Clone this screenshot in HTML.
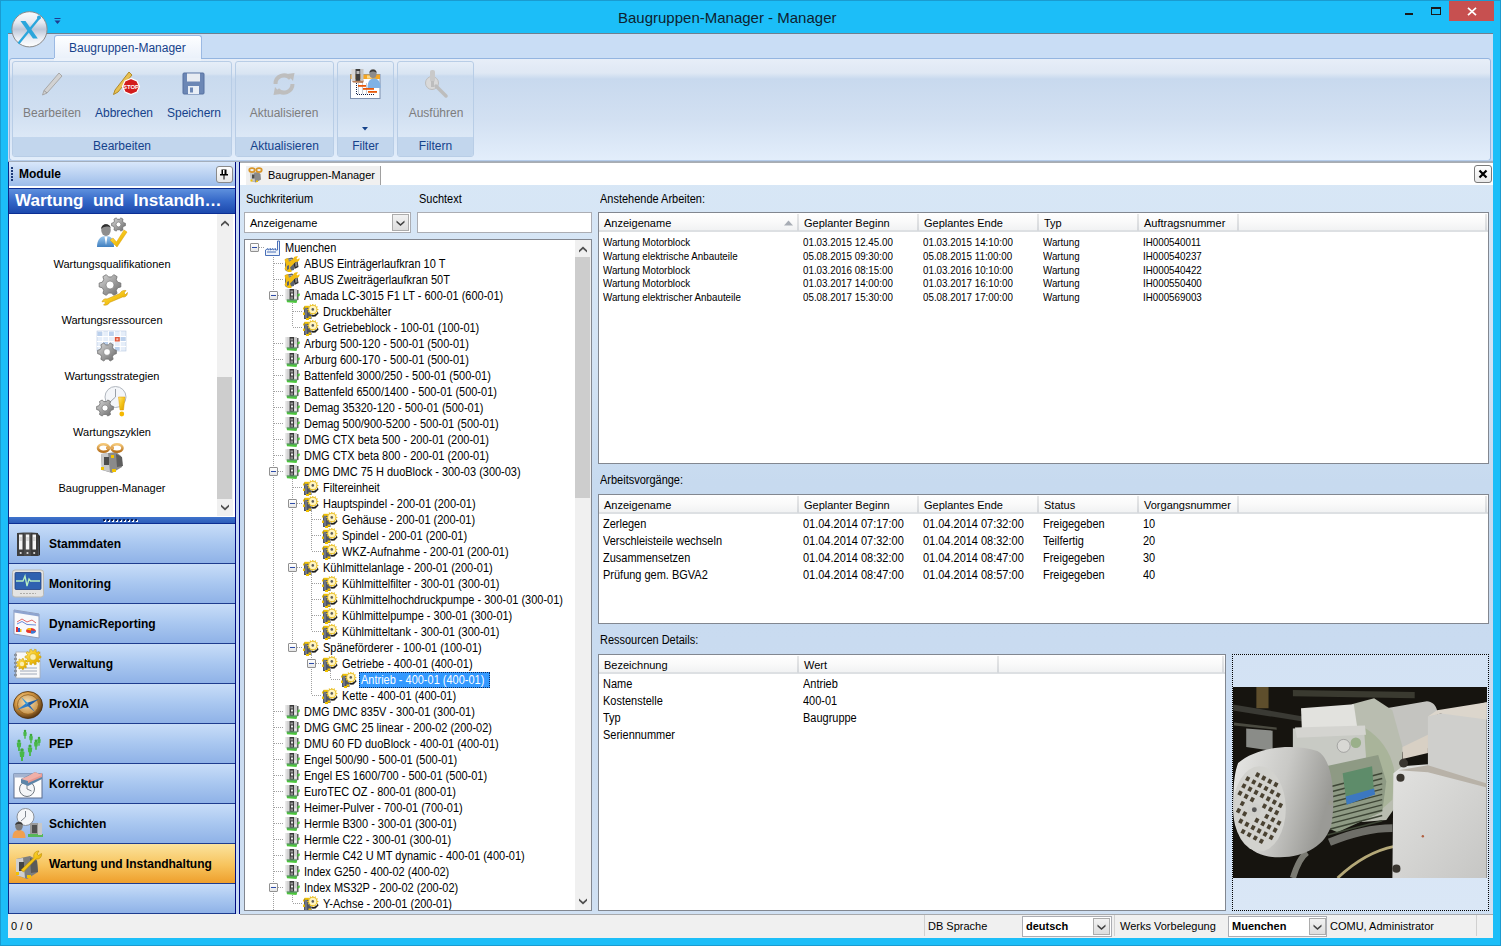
<!DOCTYPE html><html><head><meta charset="utf-8"><style>
*{box-sizing:border-box}
html,body{margin:0;padding:0}
body{width:1501px;height:946px;position:relative;overflow:hidden;background:#1CBEF8;font-family:"Liberation Sans",sans-serif;font-size:11px;color:#000}
div{position:absolute}
.t{position:absolute;white-space:nowrap;line-height:13px}
.n{transform-origin:0 0;transform:scaleX(0.89)}
.tt{font-size:12px;transform-origin:0 0;transform:scaleX(0.915)}
svg{position:absolute;overflow:visible}
</style></head><body>

<div style="position:absolute;left:0px;top:0px;width:1501px;height:1px;background:#1A9BD0"></div>
<div style="position:absolute;left:0px;top:0px;width:1px;height:946px;background:#1A9BD0"></div>
<div style="position:absolute;left:1500px;top:0px;width:1px;height:946px;background:#1A9BD0"></div>
<div style="position:absolute;left:0px;top:945px;width:1501px;height:1px;background:#1A9BD0"></div>
<div class="t" style="left:618px;top:9px;font-size:15px;line-height:17px;color:#0E2230">Baugruppen-Manager - Manager</div>
<div style="position:absolute;left:1449px;top:1px;width:45px;height:20px;background:#C75050"></div>
<svg style="left:1467px;top:7px" width="10" height="9"><path d="M1 0.8 L9 8.2 M9 0.8 L1 8.2" stroke="#fff" stroke-width="1.7"/></svg>
<div style="position:absolute;left:1405px;top:13px;width:8px;height:2px;background:#1a1a1a"></div>
<div style="position:absolute;left:1431px;top:7px;width:10px;height:8px;border:1px solid #1a1a1a;border-top-width:2px"></div>
<div style="position:absolute;left:8px;top:33px;width:1485px;height:905px;background:#C9DDF5"></div>
<div style="position:absolute;left:8px;top:33px;width:1485px;height:1px;background:#6F7F8F"></div>
<div style="position:absolute;left:54px;top:35px;width:148px;height:25px;background:linear-gradient(#FDFEFF,#E9F0FA);border:1px solid #9BB9E3;border-bottom:none;border-radius:3px 3px 0 0"></div>
<div class="t" style="left:69px;top:41px;font-size:12px;line-height:14px;color:#15428B">Baugruppen-Manager</div>
<div style="position:absolute;left:9px;top:58px;width:1482px;height:103px;background:linear-gradient(#E7EEF8 0px,#DFE8F4 14px,#C8D9EE 20px,#D2E0F2 60px,#E3EEFB 102px);border:1px solid #94B5E0;border-radius:3px"></div>
<div style="position:absolute;left:54px;top:58px;width:147px;height:3px;background:#EDF3FB"></div>
<div style="position:absolute;left:12px;top:61px;width:220px;height:96px;border:1px solid #B8CDE6;border-radius:3px;background:linear-gradient(#E6EEF8 0px,#D8E4F2 12px,#C9DAEE 14px,#D0DFF1 50px,#DCE8F6 75px)"></div>
<div style="position:absolute;left:13px;top:137px;width:218px;height:19px;background:#C2D6ED;border-radius:0 0 2px 2px"></div>
<div class="t" style="left:12px;top:139px;width:220px;text-align:center;font-size:12px;line-height:14px;color:#15428B">Bearbeiten</div>
<div style="position:absolute;left:235px;top:61px;width:99px;height:96px;border:1px solid #B8CDE6;border-radius:3px;background:linear-gradient(#E6EEF8 0px,#D8E4F2 12px,#C9DAEE 14px,#D0DFF1 50px,#DCE8F6 75px)"></div>
<div style="position:absolute;left:236px;top:137px;width:97px;height:19px;background:#C2D6ED;border-radius:0 0 2px 2px"></div>
<div class="t" style="left:235px;top:139px;width:99px;text-align:center;font-size:12px;line-height:14px;color:#15428B">Aktualisieren</div>
<div style="position:absolute;left:337px;top:61px;width:57px;height:96px;border:1px solid #B8CDE6;border-radius:3px;background:linear-gradient(#E6EEF8 0px,#D8E4F2 12px,#C9DAEE 14px,#D0DFF1 50px,#DCE8F6 75px)"></div>
<div style="position:absolute;left:338px;top:137px;width:55px;height:19px;background:#C2D6ED;border-radius:0 0 2px 2px"></div>
<div class="t" style="left:337px;top:139px;width:57px;text-align:center;font-size:12px;line-height:14px;color:#15428B">Filter</div>
<div style="position:absolute;left:397px;top:61px;width:77px;height:96px;border:1px solid #B8CDE6;border-radius:3px;background:linear-gradient(#E6EEF8 0px,#D8E4F2 12px,#C9DAEE 14px,#D0DFF1 50px,#DCE8F6 75px)"></div>
<div style="position:absolute;left:398px;top:137px;width:75px;height:19px;background:#C2D6ED;border-radius:0 0 2px 2px"></div>
<div class="t" style="left:397px;top:139px;width:77px;text-align:center;font-size:12px;line-height:14px;color:#15428B">Filtern</div>
<div class="t" style="left:-8px;top:106px;width:120px;text-align:center;font-size:12px;line-height:14px;color:#7D7D7D">Bearbeiten</div>
<div class="t" style="left:64px;top:106px;width:120px;text-align:center;font-size:12px;line-height:14px;color:#15428B">Abbrechen</div>
<div class="t" style="left:134px;top:106px;width:120px;text-align:center;font-size:12px;line-height:14px;color:#15428B">Speichern</div>
<div class="t" style="left:224px;top:106px;width:120px;text-align:center;font-size:12px;line-height:14px;color:#7D7D7D">Aktualisieren</div>
<div class="t" style="left:376px;top:106px;width:120px;text-align:center;font-size:12px;line-height:14px;color:#7D7D7D">Ausführen</div>
<svg style="left:40px;top:71px" width="24" height="26" viewBox="0 0 24 26"><path d="M19 2 L22 5 L7 22 L2.5 24 L4 19.5 Z" fill="#D2D2D2" stroke="#A8A8A8" stroke-width="1"/><path d="M4 19.5 L7 22" stroke="#9a9a9a"/></svg>
<svg style="left:112px;top:71px" width="28" height="26" viewBox="0 0 28 26"><path d="M17 1 L20 4 L6 21 L1.5 23.5 L3 19 Z" fill="#E8C050" stroke="#B08A2A" stroke-width="1"/><polygon points="13,10 19,7.5 25,10 27.5,15.5 25,21 19,23.5 13,21 10.5,15.5" fill="#D21C1C" stroke="#fff" stroke-width="1.2"/><text x="19" y="17.8" font-size="6" font-weight="bold" fill="#fff" text-anchor="middle" font-family="Liberation Sans">STOP</text></svg>
<svg style="left:182px;top:72px" width="24" height="24" viewBox="0 0 24 24"><rect x="1" y="1" width="21" height="21" rx="1" fill="#6C87B5" stroke="#5670A0"/><rect x="5" y="1.5" width="13" height="8" fill="#E8ECF2"/><rect x="6" y="14" width="11" height="8" fill="#E8EEF6"/><rect x="8" y="15.5" width="3" height="5" fill="#6C87B5"/></svg>
<svg style="left:271px;top:71px" width="26" height="26" viewBox="0 0 26 26"><path d="M4.5 13 A8.5 8.5 0 0 1 19.5 7.5" fill="none" stroke="#BEBEBE" stroke-width="4"/><path d="M21.5 13 A8.5 8.5 0 0 1 6.5 18.5" fill="none" stroke="#BEBEBE" stroke-width="4"/><path d="M16 3 L23.5 2 L22 10 Z" fill="#BEBEBE"/><path d="M10 23 L2.5 24 L4 16 Z" fill="#BEBEBE"/></svg>
<svg style="left:349px;top:68px" width="33" height="32" viewBox="0 0 33 32"><rect x="1.5" y="6.5" width="29.5" height="24" fill="#fff" stroke="#7E90AE" stroke-width="1"/><rect x="1.5" y="6.5" width="29.5" height="4.5" fill="#F5A623"/><rect x="18" y="7.5" width="5" height="3" fill="#FBD98A"/>
<g fill="#C8CED6"><rect x="9" y="15" width="1" height="11"/><rect x="13" y="15" width="1" height="11"/><rect x="17" y="15" width="1" height="11"/></g>
<path d="M7.5 15 V26.5 H26" fill="none" stroke="#10204A" stroke-width="1" stroke-dasharray="1 1"/>
<rect x="9" y="17" width="8" height="1.8" fill="#E85A0C"/><rect x="14" y="20" width="11" height="1.8" fill="#E85A0C"/><rect x="19" y="23" width="9" height="1.8" fill="#E85A0C"/>
<path d="M18.5 20 C18.5 12 22 10.5 25 10.5 C29 10.5 31.5 13 31.5 20Z" fill="#7FB2E5"/><ellipse cx="24" cy="5.5" rx="3.6" ry="4.5" fill="#8C8C8C"/><path d="M20.4 5 C20.5 1 27.5 0.5 27.6 5 C26 3 22 3 20.4 5Z" fill="#3A3A3A"/>
<rect x="2.5" y="1" width="4" height="12" fill="#D8D8D8"/><rect x="6.5" y="1" width="5" height="12" fill="#3E3E3E"/><rect x="7.5" y="3" width="3" height="3" fill="#BBBBBB"/><rect x="11.5" y="1" width="3" height="11.5" fill="#C4C4C4"/><path d="M3 13 L15 12.5 L14 15 L4 14.5Z" fill="#B8805A"/></svg>
<svg style="left:362px;top:127px" width="6" height="4"><path d="M0 0 H6 L3 3.5 Z" fill="#15428B"/></svg>
<svg style="left:422px;top:68px" width="28" height="30" viewBox="0 0 28 30"><circle cx="10" cy="15" r="6.5" fill="#D9D9D9" stroke="#BDBDBD"/><path d="M14 18 L24 28" stroke="#BDBDBD" stroke-width="3.5" stroke-linecap="round"/><rect x="8" y="2" width="5" height="12" rx="2" fill="#C9C9C9"/><rect x="9" y="13" width="3" height="6" fill="#BDBDBD"/></svg>
<div style="position:absolute;left:8px;top:160px;width:1485px;height:1px;background:#B5CCEA"></div>
<div style="position:absolute;left:8px;top:161px;width:1485px;height:1px;background:#A3AEBC"></div>
<div style="position:absolute;left:8px;top:162px;width:228px;height:752px;background:#fff;border-left:1px solid #0B2A8C;border-right:1px solid #000A80"></div>
<div style="position:absolute;left:236px;top:162px;width:3px;height:752px;background:#C7DAF2"></div>
<div style="position:absolute;left:239px;top:162px;width:1px;height:752px;background:#000A80"></div>
<div style="position:absolute;left:9px;top:162px;width:226px;height:24px;background:linear-gradient(#D9E7FA,#9DBDEA)"></div>
<div style="position:absolute;left:11px;top:167px;width:2px;height:2px;background:#1C3A78"></div>
<div style="position:absolute;left:11px;top:170px;width:2px;height:2px;background:#1C3A78"></div>
<div style="position:absolute;left:11px;top:173px;width:2px;height:2px;background:#1C3A78"></div>
<div style="position:absolute;left:11px;top:176px;width:2px;height:2px;background:#1C3A78"></div>
<div style="position:absolute;left:11px;top:179px;width:2px;height:2px;background:#1C3A78"></div>
<div class="t" style="left:19px;top:167px;font-weight:bold;font-size:12px;line-height:14px">Module</div>
<div style="position:absolute;left:216px;top:166px;width:17px;height:17px;background:linear-gradient(#FFFFFF,#E6E6E6);border:1px solid #8A8A8A;border-radius:3px"></div>
<svg style="left:219px;top:169px" width="10" height="11"><path d="M2.5 0.5 H7.5 V5 H9 V6.5 H1 V5 H2.5 Z" fill="#000"/><rect x="4" y="1" width="1.5" height="4" fill="#fff"/><rect x="4.5" y="6" width="1" height="4.5" fill="#000"/></svg>
<div style="position:absolute;left:9px;top:186px;width:226px;height:2px;background:#fff"></div>
<div style="position:absolute;left:9px;top:188px;width:226px;height:26px;background:linear-gradient(#5E90DD,#3568C8 50%,#1C49AD);border-top:1px solid #0C2F93;border-bottom:1px solid #0C2F93"></div>
<div class="t" style="left:15px;top:192px;font-weight:bold;font-size:16px;line-height:18px;color:#fff;transform-origin:0 0;transform:scaleX(1.065)">Wartung&nbsp; und&nbsp; Instandh…</div>
<div style="position:absolute;left:217px;top:214px;width:16px;height:302px;background:#F0F0F0"></div>
<div style="position:absolute;left:217px;top:377px;width:15px;height:122px;background:#CDCDCD"></div>
<svg style="left:221px;top:220px" width="8" height="7"><path d="M0 6.5 L4 3 L8 6.5 L8 4.2 L4 0.5 L0 4.2Z" fill="#505050"/></svg>
<svg style="left:221px;top:504px" width="8" height="7"><path d="M0 0.5 L4 4 L8 0.5 L8 2.8 L4 6.5 L0 2.8Z" fill="#505050"/></svg>
<div class="t" style="left:12px;top:258px;width:200px;text-align:center;color:#000">Wartungsqualifikationen</div>
<div class="t" style="left:12px;top:314px;width:200px;text-align:center;color:#000">Wartungsressourcen</div>
<div class="t" style="left:12px;top:370px;width:200px;text-align:center;color:#000">Wartungsstrategien</div>
<div class="t" style="left:12px;top:426px;width:200px;text-align:center;color:#000">Wartungszyklen</div>
<div class="t" style="left:12px;top:482px;width:200px;text-align:center;color:#000">Baugruppen-Manager</div>
<div style="position:absolute;left:9px;top:517px;width:226px;height:7px;background:linear-gradient(#3F73CC,#2C5CB8);border-bottom:1px solid #0C2F93"></div>
<div style="position:absolute;left:104px;top:520px;width:2px;height:2px;background:#fff"></div>
<div style="position:absolute;left:103px;top:519px;width:2px;height:2px;background:#0E1E50"></div>
<div style="position:absolute;left:108px;top:520px;width:2px;height:2px;background:#fff"></div>
<div style="position:absolute;left:107px;top:519px;width:2px;height:2px;background:#0E1E50"></div>
<div style="position:absolute;left:112px;top:520px;width:2px;height:2px;background:#fff"></div>
<div style="position:absolute;left:111px;top:519px;width:2px;height:2px;background:#0E1E50"></div>
<div style="position:absolute;left:116px;top:520px;width:2px;height:2px;background:#fff"></div>
<div style="position:absolute;left:115px;top:519px;width:2px;height:2px;background:#0E1E50"></div>
<div style="position:absolute;left:120px;top:520px;width:2px;height:2px;background:#fff"></div>
<div style="position:absolute;left:119px;top:519px;width:2px;height:2px;background:#0E1E50"></div>
<div style="position:absolute;left:124px;top:520px;width:2px;height:2px;background:#fff"></div>
<div style="position:absolute;left:123px;top:519px;width:2px;height:2px;background:#0E1E50"></div>
<div style="position:absolute;left:128px;top:520px;width:2px;height:2px;background:#fff"></div>
<div style="position:absolute;left:127px;top:519px;width:2px;height:2px;background:#0E1E50"></div>
<div style="position:absolute;left:132px;top:520px;width:2px;height:2px;background:#fff"></div>
<div style="position:absolute;left:131px;top:519px;width:2px;height:2px;background:#0E1E50"></div>
<div style="position:absolute;left:136px;top:520px;width:2px;height:2px;background:#fff"></div>
<div style="position:absolute;left:135px;top:519px;width:2px;height:2px;background:#0E1E50"></div>
<div style="position:absolute;left:9px;top:524px;width:226px;height:40px;background:linear-gradient(#C8DDF8,#A9C7F0 50%,#8FB2E7);border-bottom:1px solid #1D3C8F"></div>
<div class="t" style="left:49px;top:537px;font-weight:bold;font-size:12px;line-height:14px;color:#000">Stammdaten</div>
<div style="position:absolute;left:9px;top:564px;width:226px;height:40px;background:linear-gradient(#C8DDF8,#A9C7F0 50%,#8FB2E7);border-bottom:1px solid #1D3C8F"></div>
<div class="t" style="left:49px;top:577px;font-weight:bold;font-size:12px;line-height:14px;color:#000">Monitoring</div>
<div style="position:absolute;left:9px;top:604px;width:226px;height:40px;background:linear-gradient(#C8DDF8,#A9C7F0 50%,#8FB2E7);border-bottom:1px solid #1D3C8F"></div>
<div class="t" style="left:49px;top:617px;font-weight:bold;font-size:12px;line-height:14px;color:#000">DynamicReporting</div>
<div style="position:absolute;left:9px;top:644px;width:226px;height:40px;background:linear-gradient(#C8DDF8,#A9C7F0 50%,#8FB2E7);border-bottom:1px solid #1D3C8F"></div>
<div class="t" style="left:49px;top:657px;font-weight:bold;font-size:12px;line-height:14px;color:#000">Verwaltung</div>
<div style="position:absolute;left:9px;top:684px;width:226px;height:40px;background:linear-gradient(#C8DDF8,#A9C7F0 50%,#8FB2E7);border-bottom:1px solid #1D3C8F"></div>
<div class="t" style="left:49px;top:697px;font-weight:bold;font-size:12px;line-height:14px;color:#000">ProXIA</div>
<div style="position:absolute;left:9px;top:724px;width:226px;height:40px;background:linear-gradient(#C8DDF8,#A9C7F0 50%,#8FB2E7);border-bottom:1px solid #1D3C8F"></div>
<div class="t" style="left:49px;top:737px;font-weight:bold;font-size:12px;line-height:14px;color:#000">PEP</div>
<div style="position:absolute;left:9px;top:764px;width:226px;height:40px;background:linear-gradient(#C8DDF8,#A9C7F0 50%,#8FB2E7);border-bottom:1px solid #1D3C8F"></div>
<div class="t" style="left:49px;top:777px;font-weight:bold;font-size:12px;line-height:14px;color:#000">Korrektur</div>
<div style="position:absolute;left:9px;top:804px;width:226px;height:40px;background:linear-gradient(#C8DDF8,#A9C7F0 50%,#8FB2E7);border-bottom:1px solid #1D3C8F"></div>
<div class="t" style="left:49px;top:817px;font-weight:bold;font-size:12px;line-height:14px;color:#000">Schichten</div>
<div style="position:absolute;left:9px;top:844px;width:226px;height:40px;background:linear-gradient(#FBE39E,#F7C35C 55%,#EE9F2C);border-bottom:1px solid #1D3C8F"></div>
<div class="t" style="left:49px;top:857px;font-weight:bold;font-size:12px;line-height:14px;color:#000">Wartung und Instandhaltung</div>
<div style="position:absolute;left:9px;top:884px;width:226px;height:30px;background:linear-gradient(#C8DDF8,#A9C7F0 50%,#8FB2E7);border-bottom:1px solid #1D3C8F"></div>
<div style="position:absolute;left:8px;top:914px;width:1485px;height:24px;background:#F0F0F0"></div>
<div class="t" style="left:11px;top:920px;font-size:11px">0 / 0</div>
<div style="position:absolute;left:240px;top:914px;width:1253px;height:1px;background:#A7A9AC"></div>
<div style="position:absolute;left:240px;top:162px;width:1253px;height:752px;background:linear-gradient(#D8E7F6 0px,#D3E3F4 200px,#C7DAEF 320px,#C9DBF0 480px,#CCDDF1 640px,#D6E5F5 900px)"></div>
<div style="position:absolute;left:240px;top:162px;width:1253px;height:23px;background:#fff;border-top:1px solid #A9ADB2"></div>
<div style="position:absolute;left:246px;top:166px;width:134px;height:19px;background:#F0F0F0"></div>
<div style="position:absolute;left:380px;top:166px;width:1px;height:19px;background:#A0A0A0"></div>
<div class="t" style="left:268px;top:169px;font-size:11px;line-height:13px">Baugruppen-Manager</div>
<div style="position:absolute;left:1474px;top:165px;width:18px;height:18px;background:linear-gradient(#fff,#E8E8E8);border:1px solid #7A7A7A;border-radius:3px"></div>
<svg style="left:1478px;top:169px" width="10" height="10"><path d="M1.5 1.5 L8.5 8.5 M8.5 1.5 L1.5 8.5" stroke="#000" stroke-width="2.2"/></svg>
<div class="t" style="left:246px;top:193px;font-size:12px;transform-origin:0 0;transform:scaleX(0.915)">Suchkriterium</div>
<div class="t" style="left:419px;top:193px;font-size:12px;transform-origin:0 0;transform:scaleX(0.915)">Suchtext</div>
<div style="position:absolute;left:244px;top:212px;width:167px;height:21px;background:#fff;border:1px solid #ABADB3"></div>
<div style="position:absolute;left:392px;top:214px;width:17px;height:17px;background:linear-gradient(#F2F2F2,#DDDDDD);border:1px solid #ACACAC"></div>
<svg style="left:396px;top:220px" width="9" height="7"><path d="M0.5 0.5 L4.5 4 L8.5 0.5 L8.5 2.5 L4.5 6 L0.5 2.5Z" fill="#404040"/></svg>
<div class="t" style="left:250px;top:217px;">Anzeigename</div>
<div style="position:absolute;left:417px;top:212px;width:175px;height:21px;background:#fff;border:1px solid #ABADB3"></div>
<div style="position:absolute;left:244px;top:239px;width:348px;height:672px;background:#fff;border:1px solid #828790"></div>
<div style="position:absolute;left:575px;top:240px;width:16px;height:670px;background:#F0F0F0"></div>
<div style="position:absolute;left:575px;top:257px;width:15px;height:241px;background:#CDCDCD"></div>
<svg style="left:579px;top:246px" width="8" height="7"><path d="M0 6.5 L4 3 L8 6.5 L8 4.2 L4 0.5 L0 4.2Z" fill="#505050"/></svg>
<svg style="left:579px;top:898px" width="8" height="7"><path d="M0 0.5 L4 4 L8 0.5 L8 2.8 L4 6.5 L0 2.8Z" fill="#505050"/></svg>
<div class="t" style="left:600px;top:193px;font-size:12px;transform-origin:0 0;transform:scaleX(0.915)">Anstehende Arbeiten:</div>
<div class="t" style="left:600px;top:474px;font-size:12px;transform-origin:0 0;transform:scaleX(0.915)">Arbeitsvorgänge:</div>
<div class="t" style="left:600px;top:634px;font-size:12px;transform-origin:0 0;transform:scaleX(0.915)">Ressourcen Details:</div>
<div style="position:absolute;left:598px;top:212px;width:891px;height:252px;background:#fff;border:1px solid #828790"></div>
<div style="position:absolute;left:599px;top:213px;width:889px;height:19px;background:linear-gradient(#FFFFFF,#FAFAFA 50%,#F1F2F3);border-bottom:2px solid #DDE0E3"></div>
<div class="t" style="left:604px;top:217px;">Anzeigename</div>
<div style="position:absolute;left:797px;top:214px;width:2px;height:17px;background:linear-gradient(#E8E8E8,#D5D8DC)"></div>
<div class="t" style="left:804px;top:217px;">Geplanter Beginn</div>
<div style="position:absolute;left:917px;top:214px;width:2px;height:17px;background:linear-gradient(#E8E8E8,#D5D8DC)"></div>
<div class="t" style="left:924px;top:217px;">Geplantes Ende</div>
<div style="position:absolute;left:1037px;top:214px;width:2px;height:17px;background:linear-gradient(#E8E8E8,#D5D8DC)"></div>
<div class="t" style="left:1044px;top:217px;">Typ</div>
<div style="position:absolute;left:1137px;top:214px;width:2px;height:17px;background:linear-gradient(#E8E8E8,#D5D8DC)"></div>
<div class="t" style="left:1144px;top:217px;">Auftragsnummer</div>
<div style="position:absolute;left:1237px;top:214px;width:2px;height:17px;background:linear-gradient(#E8E8E8,#D5D8DC)"></div>
<div style="position:absolute;left:1485px;top:214px;width:2px;height:17px;background:linear-gradient(#E8E8E8,#D5D8DC)"></div>
<svg style="left:784px;top:220px" width="9" height="6"><path d="M0 5.5 L4.5 0.5 L9 5.5 Z" fill="#A8ADB5"/></svg>
<div style="position:absolute;left:598px;top:494px;width:891px;height:130px;background:#fff;border:1px solid #828790"></div>
<div style="position:absolute;left:599px;top:495px;width:889px;height:19px;background:linear-gradient(#FFFFFF,#FAFAFA 50%,#F1F2F3);border-bottom:2px solid #DDE0E3"></div>
<div class="t" style="left:604px;top:499px;">Anzeigename</div>
<div style="position:absolute;left:797px;top:496px;width:2px;height:17px;background:linear-gradient(#E8E8E8,#D5D8DC)"></div>
<div class="t" style="left:804px;top:499px;">Geplanter Beginn</div>
<div style="position:absolute;left:917px;top:496px;width:2px;height:17px;background:linear-gradient(#E8E8E8,#D5D8DC)"></div>
<div class="t" style="left:924px;top:499px;">Geplantes Ende</div>
<div style="position:absolute;left:1037px;top:496px;width:2px;height:17px;background:linear-gradient(#E8E8E8,#D5D8DC)"></div>
<div class="t" style="left:1044px;top:499px;">Status</div>
<div style="position:absolute;left:1137px;top:496px;width:2px;height:17px;background:linear-gradient(#E8E8E8,#D5D8DC)"></div>
<div class="t" style="left:1144px;top:499px;">Vorgangsnummer</div>
<div style="position:absolute;left:1237px;top:496px;width:2px;height:17px;background:linear-gradient(#E8E8E8,#D5D8DC)"></div>
<div style="position:absolute;left:1485px;top:496px;width:2px;height:17px;background:linear-gradient(#E8E8E8,#D5D8DC)"></div>
<div style="position:absolute;left:598px;top:654px;width:628px;height:257px;background:#fff;border:1px solid #828790"></div>
<div style="position:absolute;left:599px;top:655px;width:626px;height:19px;background:linear-gradient(#FFFFFF,#FAFAFA 50%,#F1F2F3);border-bottom:2px solid #DDE0E3"></div>
<div class="t" style="left:604px;top:659px;">Bezeichnung</div>
<div style="position:absolute;left:797px;top:656px;width:2px;height:17px;background:linear-gradient(#E8E8E8,#D5D8DC)"></div>
<div class="t" style="left:804px;top:659px;">Wert</div>
<div style="position:absolute;left:997px;top:656px;width:2px;height:17px;background:linear-gradient(#E8E8E8,#D5D8DC)"></div>
<div style="position:absolute;left:1222px;top:656px;width:2px;height:17px;background:linear-gradient(#E8E8E8,#D5D8DC)"></div>
<div class="t n" style="left:603px;top:236px">Wartung Motorblock</div>
<div class="t n" style="left:803px;top:236px">01.03.2015 12.45.00</div>
<div class="t n" style="left:923px;top:236px">01.03.2015 14:10:00</div>
<div class="t n" style="left:1043px;top:236px">Wartung</div>
<div class="t n" style="left:1143px;top:236px">IH000540011</div>
<div class="t n" style="left:603px;top:250px">Wartung elektrische Anbauteile</div>
<div class="t n" style="left:803px;top:250px">05.08.2015 09:30:00</div>
<div class="t n" style="left:923px;top:250px">05.08.2015 11:00:00</div>
<div class="t n" style="left:1043px;top:250px">Wartung</div>
<div class="t n" style="left:1143px;top:250px">IH000540237</div>
<div class="t n" style="left:603px;top:264px">Wartung Motorblock</div>
<div class="t n" style="left:803px;top:264px">01.03.2016 08:15:00</div>
<div class="t n" style="left:923px;top:264px">01.03.2016 10:10:00</div>
<div class="t n" style="left:1043px;top:264px">Wartung</div>
<div class="t n" style="left:1143px;top:264px">IH000540422</div>
<div class="t n" style="left:603px;top:277px">Wartung Motorblock</div>
<div class="t n" style="left:803px;top:277px">01.03.2017 14:00:00</div>
<div class="t n" style="left:923px;top:277px">01.03.2017 16:10:00</div>
<div class="t n" style="left:1043px;top:277px">Wartung</div>
<div class="t n" style="left:1143px;top:277px">IH000550400</div>
<div class="t n" style="left:603px;top:291px">Wartung elektrischer Anbauteile</div>
<div class="t n" style="left:803px;top:291px">05.08.2017 15:30:00</div>
<div class="t n" style="left:923px;top:291px">05.08.2017 17:00:00</div>
<div class="t n" style="left:1043px;top:291px">Wartung</div>
<div class="t n" style="left:1143px;top:291px">IH000569003</div>
<div class="t" style="left:603px;top:518px;font-size:12px;transform-origin:0 0;transform:scaleX(0.915)">Zerlegen</div>
<div class="t" style="left:803px;top:518px;font-size:12px;transform-origin:0 0;transform:scaleX(0.915)">01.04.2014 07:17:00</div>
<div class="t" style="left:923px;top:518px;font-size:12px;transform-origin:0 0;transform:scaleX(0.915)">01.04.2014 07:32:00</div>
<div class="t" style="left:1043px;top:518px;font-size:12px;transform-origin:0 0;transform:scaleX(0.915)">Freigegeben</div>
<div class="t" style="left:1143px;top:518px;font-size:12px;transform-origin:0 0;transform:scaleX(0.915)">10</div>
<div class="t" style="left:603px;top:535px;font-size:12px;transform-origin:0 0;transform:scaleX(0.915)">Verschleisteile wechseln</div>
<div class="t" style="left:803px;top:535px;font-size:12px;transform-origin:0 0;transform:scaleX(0.915)">01.04.2014 07:32:00</div>
<div class="t" style="left:923px;top:535px;font-size:12px;transform-origin:0 0;transform:scaleX(0.915)">01.04.2014 08:32:00</div>
<div class="t" style="left:1043px;top:535px;font-size:12px;transform-origin:0 0;transform:scaleX(0.915)">Teilfertig</div>
<div class="t" style="left:1143px;top:535px;font-size:12px;transform-origin:0 0;transform:scaleX(0.915)">20</div>
<div class="t" style="left:603px;top:552px;font-size:12px;transform-origin:0 0;transform:scaleX(0.915)">Zusammensetzen</div>
<div class="t" style="left:803px;top:552px;font-size:12px;transform-origin:0 0;transform:scaleX(0.915)">01.04.2014 08:32:00</div>
<div class="t" style="left:923px;top:552px;font-size:12px;transform-origin:0 0;transform:scaleX(0.915)">01.04.2014 08:47:00</div>
<div class="t" style="left:1043px;top:552px;font-size:12px;transform-origin:0 0;transform:scaleX(0.915)">Freigegeben</div>
<div class="t" style="left:1143px;top:552px;font-size:12px;transform-origin:0 0;transform:scaleX(0.915)">30</div>
<div class="t" style="left:603px;top:569px;font-size:12px;transform-origin:0 0;transform:scaleX(0.915)">Prüfung gem. BGVA2</div>
<div class="t" style="left:803px;top:569px;font-size:12px;transform-origin:0 0;transform:scaleX(0.915)">01.04.2014 08:47:00</div>
<div class="t" style="left:923px;top:569px;font-size:12px;transform-origin:0 0;transform:scaleX(0.915)">01.04.2014 08:57:00</div>
<div class="t" style="left:1043px;top:569px;font-size:12px;transform-origin:0 0;transform:scaleX(0.915)">Freigegeben</div>
<div class="t" style="left:1143px;top:569px;font-size:12px;transform-origin:0 0;transform:scaleX(0.915)">40</div>
<div class="t" style="left:603px;top:678px;font-size:12px;transform-origin:0 0;transform:scaleX(0.915)">Name</div>
<div class="t" style="left:803px;top:678px;font-size:12px;transform-origin:0 0;transform:scaleX(0.915)">Antrieb</div>
<div class="t" style="left:603px;top:695px;font-size:12px;transform-origin:0 0;transform:scaleX(0.915)">Kostenstelle</div>
<div class="t" style="left:803px;top:695px;font-size:12px;transform-origin:0 0;transform:scaleX(0.915)">400-01</div>
<div class="t" style="left:603px;top:712px;font-size:12px;transform-origin:0 0;transform:scaleX(0.915)">Typ</div>
<div class="t" style="left:803px;top:712px;font-size:12px;transform-origin:0 0;transform:scaleX(0.915)">Baugruppe</div>
<div class="t" style="left:603px;top:729px;font-size:12px;transform-origin:0 0;transform:scaleX(0.915)">Seriennummer</div>
<div style="position:absolute;left:1232px;top:654px;width:257px;height:257px;border:1px dotted #000;background:linear-gradient(#D3E2F4,#DAE7F6)"></div>
<div style="position:absolute;left:1233px;top:687px;width:253px;height:191px;background:#151410"></div>
<div style="position:absolute;left:924px;top:915px;width:1px;height:21px;background:#D0D0D0"></div>
<div class="t" style="left:928px;top:920px;">DB Sprache</div>
<div style="position:absolute;left:1022px;top:916px;width:90px;height:21px;background:#fff;border:1px solid #ABADB3"></div>
<div class="t" style="left:1026px;top:920px;font-weight:bold">deutsch</div>
<div style="position:absolute;left:1093px;top:918px;width:17px;height:17px;background:linear-gradient(#F2F2F2,#DDDDDD);border:1px solid #ACACAC"></div>
<svg style="left:1097px;top:924px" width="9" height="7"><path d="M0.5 0.5 L4.5 4 L8.5 0.5 L8.5 2.5 L4.5 6 L0.5 2.5Z" fill="#404040"/></svg>
<div style="position:absolute;left:1114px;top:915px;width:1px;height:21px;background:#D0D0D0"></div>
<div class="t" style="left:1120px;top:920px;">Werks Vorbelegung</div>
<div style="position:absolute;left:1228px;top:916px;width:99px;height:21px;background:#fff;border:1px solid #ABADB3"></div>
<div class="t" style="left:1232px;top:920px;font-weight:bold">Muenchen</div>
<div style="position:absolute;left:1309px;top:918px;width:17px;height:17px;background:linear-gradient(#F2F2F2,#DDDDDD);border:1px solid #ACACAC"></div>
<svg style="left:1313px;top:924px" width="9" height="7"><path d="M0.5 0.5 L4.5 4 L8.5 0.5 L8.5 2.5 L4.5 6 L0.5 2.5Z" fill="#404040"/></svg>
<div class="t" style="left:1330px;top:920px;">COMU, Administrator</div>
<div style="position:absolute;left:1476px;top:915px;width:1px;height:21px;background:#D0D0D0"></div>
<svg width="0" height="0" style="position:absolute"><defs>
<symbol id="icM" viewBox="0 0 16 16"><rect x="1.5" y="1" width="4" height="11" fill="#D4D4D4"/><rect x="1.5" y="1" width="1" height="11" fill="#EEEEEE"/><rect x="5.5" y="1" width="4.5" height="11" fill="#3A3A3A"/><rect x="6.5" y="2.5" width="2.5" height="2" fill="#9A9A9A"/><rect x="7" y="5.5" width="2" height="2" fill="#EAEAEA"/><rect x="6.5" y="8.5" width="2.5" height="2.5" fill="#8A8A8A"/><rect x="10" y="1" width="3" height="10.5" fill="#CDCDCD"/><rect x="10.5" y="8.5" width="2" height="2" fill="#F2F2F2"/><rect x="13" y="2" width="1.5" height="10" fill="#606060"/><path d="M13.5 6 L16 5.5 L15.5 8 L13.5 8.8Z" fill="#4CC63C"/><path d="M2.5 11.5 L13.5 11.5 L12.5 15 L3 14.2Z" fill="#4CC63C"/><path d="M3 12 L13 12" stroke="#6A6A8A" stroke-width="0.8"/></symbol>
<symbol id="icG" viewBox="0 0 16 16"><rect x="1" y="2.5" width="7.5" height="12.5" fill="#4E5566"/><rect x="2" y="3" width="2" height="11" fill="#6E7586"/><rect x="1.5" y="1.8" width="4.5" height="2" fill="#F2C200"/><rect x="0" y="3.5" width="1.5" height="2" fill="#F2C200"/><rect x="0" y="8.5" width="1.8" height="2.5" fill="#F2C200"/><rect x="3" y="14" width="3" height="2" fill="#F2C200"/><rect x="5.5" y="12.5" width="2.5" height="2" fill="#F2C200"/><path d="M14.23 4.63 L15.38 4.90 L15.38 5.90 L14.23 6.17 L14.03 6.95 L14.88 7.76 L14.38 8.62 L13.25 8.29 L12.69 8.85 L13.02 9.98 L12.16 10.48 L11.35 9.63 L10.57 9.83 L10.30 10.98 L9.30 10.98 L9.03 9.83 L8.25 9.63 L7.44 10.48 L6.58 9.98 L6.91 8.85 L6.35 8.29 L5.22 8.62 L4.72 7.76 L5.57 6.95 L5.37 6.17 L4.22 5.90 L4.22 4.90 L5.37 4.63 L5.57 3.85 L4.72 3.04 L5.22 2.18 L6.35 2.51 L6.91 1.95 L6.58 0.82 L7.44 0.32 L8.25 1.17 L9.03 0.97 L9.30 -0.18 L10.30 -0.18 L10.57 0.97 L11.35 1.17 L12.16 0.32 L13.02 0.82 L12.69 1.95 L13.25 2.51 L14.38 2.18 L14.88 3.04 L14.03 3.85 Z" fill="#EBC22A"/><path d="M14.8 7.5 C13.5 10.5 10.5 11.5 8 11 L9.5 12.8 L12.5 12.5 L15.5 9.5Z" fill="#1E1E1E"/><circle cx="9.8" cy="5.4" r="3.6" fill="#FFF4C0"/><circle cx="9.8" cy="5.4" r="1.3" fill="#5E5E5E"/></symbol>
<symbol id="icC" viewBox="0 0 16 16"><path d="M1 3 L8 1.5 L10 3 L10 14 L3 15.5 L1 14Z" fill="#5C6470"/><path d="M2 4.5 L8 3.5 M2 6.5 L8 5.5 M2 8.5 L7 7.8" stroke="#B8C0CA" stroke-width="0.9"/><path d="M9.5 6 L13.5 5 L14.5 11 L10.5 13Z" fill="#2A2A2A"/><path d="M11 6.5 L13 6 L13.5 10 L11.5 11Z" fill="#8A8A8A"/><path d="M0.5 3.5 L4 2 L5 6 L9.5 2.5 C10 0.5 12 0 14 0.5 L12.5 2.5 L13.5 3.5 L15.5 2 C16 5 13.5 6.5 11.5 6 L6 11.5 L7 14 L3.5 15.5 L0.5 13 L2 9Z" fill="#F2BC12"/><path d="M3 10 L5 9 L5 13 L3 14Z" fill="#5C6470"/><rect x="4" y="14" width="3.5" height="2" fill="#F5C000"/></symbol>
<symbol id="icF" viewBox="0 0 16 16"><path d="M0.5 15.5 V10 L3 8.5 V10 L5.5 8.5 V10 L8 8.5 V10 L10.5 8.5 V10 L12.5 10 V1 H14.5 V15.5 Z" fill="#EEF3FA" stroke="#4A70B8" stroke-width="1"/><path d="M2 12 H11" stroke="#4A70B8" stroke-width="1"/></symbol>
</defs></svg>
<svg style="left:0;top:0" width="1501" height="946"><defs><clipPath id="tc"><rect x="245" y="240" width="330" height="670"/></clipPath></defs><g clip-path="url(#tc)" stroke="#A0A0A0" stroke-width="1" stroke-dasharray="1 1" fill="none"><path d="M259 247.5 H264"/><path d="M273.5 255 V911"/><path d="M274 263.5 H283"/><path d="M274 279.5 H283"/><path d="M278 295.5 H283"/><path d="M292.5 303 V327"/><path d="M293 311.5 H302"/><path d="M293 327.5 H302"/><path d="M274 343.5 H283"/><path d="M274 359.5 H283"/><path d="M274 375.5 H283"/><path d="M274 391.5 H283"/><path d="M274 407.5 H283"/><path d="M274 423.5 H283"/><path d="M274 439.5 H283"/><path d="M274 455.5 H283"/><path d="M278 471.5 H283"/><path d="M292.5 479 V647"/><path d="M293 487.5 H302"/><path d="M297 503.5 H302"/><path d="M311.5 511 V551"/><path d="M312 519.5 H321"/><path d="M312 535.5 H321"/><path d="M312 551.5 H321"/><path d="M297 567.5 H302"/><path d="M311.5 575 V631"/><path d="M312 583.5 H321"/><path d="M312 599.5 H321"/><path d="M312 615.5 H321"/><path d="M312 631.5 H321"/><path d="M297 647.5 H302"/><path d="M311.5 655 V695"/><path d="M316 663.5 H321"/><path d="M330.5 671 V679"/><path d="M331 679.5 H340"/><path d="M312 695.5 H321"/><path d="M274 711.5 H283"/><path d="M274 727.5 H283"/><path d="M274 743.5 H283"/><path d="M274 759.5 H283"/><path d="M274 775.5 H283"/><path d="M274 791.5 H283"/><path d="M274 807.5 H283"/><path d="M274 823.5 H283"/><path d="M274 839.5 H283"/><path d="M274 855.5 H283"/><path d="M274 871.5 H283"/><path d="M278 887.5 H283"/><path d="M292.5 895 V903"/><path d="M293 903.5 H302"/></g></svg>
<div style="left:245px;top:240px;width:330px;height:670px;overflow:hidden">
<div style="left:5px;top:3px;width:9px;height:9px;border:1px solid #919191;background:linear-gradient(#fff,#E6E6E6);border-radius:1px"><div style="left:1px;top:3px;width:5px;height:1px;background:#2D4CA8"></div></div>
<svg style="left:20px;top:0px" width="16" height="16"><use href="#icF"/></svg>
<div class="t tt" style="left:40px;top:2px">Muenchen</div>
<svg style="left:39px;top:16px" width="16" height="16"><use href="#icC"/></svg>
<div class="t tt" style="left:59px;top:18px">ABUS Einträgerlaufkran 10 T</div>
<svg style="left:39px;top:32px" width="16" height="16"><use href="#icC"/></svg>
<div class="t tt" style="left:59px;top:34px">ABUS Zweiträgerlaufkran 50T</div>
<div style="left:24px;top:51px;width:9px;height:9px;border:1px solid #919191;background:linear-gradient(#fff,#E6E6E6);border-radius:1px"><div style="left:1px;top:3px;width:5px;height:1px;background:#2D4CA8"></div></div>
<svg style="left:39px;top:48px" width="16" height="16"><use href="#icM"/></svg>
<div class="t tt" style="left:59px;top:50px">Amada LC-3015 F1 LT - 600-01 (600-01)</div>
<svg style="left:58px;top:64px" width="16" height="16"><use href="#icG"/></svg>
<div class="t tt" style="left:78px;top:66px">Druckbehälter</div>
<svg style="left:58px;top:80px" width="16" height="16"><use href="#icG"/></svg>
<div class="t tt" style="left:78px;top:82px">Getriebeblock - 100-01 (100-01)</div>
<svg style="left:39px;top:96px" width="16" height="16"><use href="#icM"/></svg>
<div class="t tt" style="left:59px;top:98px">Arburg 500-120 - 500-01 (500-01)</div>
<svg style="left:39px;top:112px" width="16" height="16"><use href="#icM"/></svg>
<div class="t tt" style="left:59px;top:114px">Arburg 600-170 - 500-01 (500-01)</div>
<svg style="left:39px;top:128px" width="16" height="16"><use href="#icM"/></svg>
<div class="t tt" style="left:59px;top:130px">Battenfeld 3000/250 - 500-01 (500-01)</div>
<svg style="left:39px;top:144px" width="16" height="16"><use href="#icM"/></svg>
<div class="t tt" style="left:59px;top:146px">Battenfeld 6500/1400 - 500-01 (500-01)</div>
<svg style="left:39px;top:160px" width="16" height="16"><use href="#icM"/></svg>
<div class="t tt" style="left:59px;top:162px">Demag 35320-120 - 500-01 (500-01)</div>
<svg style="left:39px;top:176px" width="16" height="16"><use href="#icM"/></svg>
<div class="t tt" style="left:59px;top:178px">Demag 500/900-5200 - 500-01 (500-01)</div>
<svg style="left:39px;top:192px" width="16" height="16"><use href="#icM"/></svg>
<div class="t tt" style="left:59px;top:194px">DMG CTX beta 500 - 200-01 (200-01)</div>
<svg style="left:39px;top:208px" width="16" height="16"><use href="#icM"/></svg>
<div class="t tt" style="left:59px;top:210px">DMG CTX beta 800 - 200-01 (200-01)</div>
<div style="left:24px;top:227px;width:9px;height:9px;border:1px solid #919191;background:linear-gradient(#fff,#E6E6E6);border-radius:1px"><div style="left:1px;top:3px;width:5px;height:1px;background:#2D4CA8"></div></div>
<svg style="left:39px;top:224px" width="16" height="16"><use href="#icM"/></svg>
<div class="t tt" style="left:59px;top:226px">DMG DMC 75 H duoBlock - 300-03 (300-03)</div>
<svg style="left:58px;top:240px" width="16" height="16"><use href="#icG"/></svg>
<div class="t tt" style="left:78px;top:242px">Filtereinheit</div>
<div style="left:43px;top:259px;width:9px;height:9px;border:1px solid #919191;background:linear-gradient(#fff,#E6E6E6);border-radius:1px"><div style="left:1px;top:3px;width:5px;height:1px;background:#2D4CA8"></div></div>
<svg style="left:58px;top:256px" width="16" height="16"><use href="#icG"/></svg>
<div class="t tt" style="left:78px;top:258px">Hauptspindel - 200-01 (200-01)</div>
<svg style="left:77px;top:272px" width="16" height="16"><use href="#icG"/></svg>
<div class="t tt" style="left:97px;top:274px">Gehäuse - 200-01 (200-01)</div>
<svg style="left:77px;top:288px" width="16" height="16"><use href="#icG"/></svg>
<div class="t tt" style="left:97px;top:290px">Spindel - 200-01 (200-01)</div>
<svg style="left:77px;top:304px" width="16" height="16"><use href="#icG"/></svg>
<div class="t tt" style="left:97px;top:306px">WKZ-Aufnahme - 200-01 (200-01)</div>
<div style="left:43px;top:323px;width:9px;height:9px;border:1px solid #919191;background:linear-gradient(#fff,#E6E6E6);border-radius:1px"><div style="left:1px;top:3px;width:5px;height:1px;background:#2D4CA8"></div></div>
<svg style="left:58px;top:320px" width="16" height="16"><use href="#icG"/></svg>
<div class="t tt" style="left:78px;top:322px">Kühlmittelanlage - 200-01 (200-01)</div>
<svg style="left:77px;top:336px" width="16" height="16"><use href="#icG"/></svg>
<div class="t tt" style="left:97px;top:338px">Kühlmittelfilter - 300-01 (300-01)</div>
<svg style="left:77px;top:352px" width="16" height="16"><use href="#icG"/></svg>
<div class="t tt" style="left:97px;top:354px">Kühlmittelhochdruckpumpe - 300-01 (300-01)</div>
<svg style="left:77px;top:368px" width="16" height="16"><use href="#icG"/></svg>
<div class="t tt" style="left:97px;top:370px">Kühlmittelpumpe - 300-01 (300-01)</div>
<svg style="left:77px;top:384px" width="16" height="16"><use href="#icG"/></svg>
<div class="t tt" style="left:97px;top:386px">Kühlmitteltank - 300-01 (300-01)</div>
<div style="left:43px;top:403px;width:9px;height:9px;border:1px solid #919191;background:linear-gradient(#fff,#E6E6E6);border-radius:1px"><div style="left:1px;top:3px;width:5px;height:1px;background:#2D4CA8"></div></div>
<svg style="left:58px;top:400px" width="16" height="16"><use href="#icG"/></svg>
<div class="t tt" style="left:78px;top:402px">Späneförderer - 100-01 (100-01)</div>
<div style="left:62px;top:419px;width:9px;height:9px;border:1px solid #919191;background:linear-gradient(#fff,#E6E6E6);border-radius:1px"><div style="left:1px;top:3px;width:5px;height:1px;background:#2D4CA8"></div></div>
<svg style="left:77px;top:416px" width="16" height="16"><use href="#icG"/></svg>
<div class="t tt" style="left:97px;top:418px">Getriebe - 400-01 (400-01)</div>
<svg style="left:96px;top:432px" width="16" height="16"><use href="#icG"/></svg>
<div style="left:114px;top:432px;width:131px;height:16px;background:#3399FF;outline:1px dotted #0a2a60;outline-offset:-1px"></div>
<div class="t tt" style="left:116px;top:434px;color:#fff">Antrieb - 400-01 (400-01)</div>
<svg style="left:77px;top:448px" width="16" height="16"><use href="#icG"/></svg>
<div class="t tt" style="left:97px;top:450px">Kette - 400-01 (400-01)</div>
<svg style="left:39px;top:464px" width="16" height="16"><use href="#icM"/></svg>
<div class="t tt" style="left:59px;top:466px">DMG DMC 835V - 300-01 (300-01)</div>
<svg style="left:39px;top:480px" width="16" height="16"><use href="#icM"/></svg>
<div class="t tt" style="left:59px;top:482px">DMG GMC 25 linear - 200-02 (200-02)</div>
<svg style="left:39px;top:496px" width="16" height="16"><use href="#icM"/></svg>
<div class="t tt" style="left:59px;top:498px">DMU 60 FD duoBlock - 400-01 (400-01)</div>
<svg style="left:39px;top:512px" width="16" height="16"><use href="#icM"/></svg>
<div class="t tt" style="left:59px;top:514px">Engel 500/90 - 500-01 (500-01)</div>
<svg style="left:39px;top:528px" width="16" height="16"><use href="#icM"/></svg>
<div class="t tt" style="left:59px;top:530px">Engel ES 1600/700 - 500-01 (500-01)</div>
<svg style="left:39px;top:544px" width="16" height="16"><use href="#icM"/></svg>
<div class="t tt" style="left:59px;top:546px">EuroTEC OZ - 800-01 (800-01)</div>
<svg style="left:39px;top:560px" width="16" height="16"><use href="#icM"/></svg>
<div class="t tt" style="left:59px;top:562px">Heimer-Pulver - 700-01 (700-01)</div>
<svg style="left:39px;top:576px" width="16" height="16"><use href="#icM"/></svg>
<div class="t tt" style="left:59px;top:578px">Hermle B300 - 300-01 (300-01)</div>
<svg style="left:39px;top:592px" width="16" height="16"><use href="#icM"/></svg>
<div class="t tt" style="left:59px;top:594px">Hermle C22 - 300-01 (300-01)</div>
<svg style="left:39px;top:608px" width="16" height="16"><use href="#icM"/></svg>
<div class="t tt" style="left:59px;top:610px">Hermle C42 U MT dynamic - 400-01 (400-01)</div>
<svg style="left:39px;top:624px" width="16" height="16"><use href="#icM"/></svg>
<div class="t tt" style="left:59px;top:626px">Index G250 - 400-02 (400-02)</div>
<div style="left:24px;top:643px;width:9px;height:9px;border:1px solid #919191;background:linear-gradient(#fff,#E6E6E6);border-radius:1px"><div style="left:1px;top:3px;width:5px;height:1px;background:#2D4CA8"></div></div>
<svg style="left:39px;top:640px" width="16" height="16"><use href="#icM"/></svg>
<div class="t tt" style="left:59px;top:642px">Index MS32P - 200-02 (200-02)</div>
<svg style="left:58px;top:656px" width="16" height="16"><use href="#icG"/></svg>
<div class="t tt" style="left:78px;top:658px">Y-Achse - 200-01 (200-01)</div>
</div>
<svg width="0" height="0" style="position:absolute"><defs>
<linearGradient id="ggray" x1="0" y1="0" x2="1" y2="1"><stop offset="0" stop-color="#D8D8D8"/><stop offset="0.5" stop-color="#A0A0A0"/><stop offset="1" stop-color="#6A6A6A"/></linearGradient>
<linearGradient id="gyel" x1="0" y1="0" x2="1" y2="1"><stop offset="0" stop-color="#FFE680"/><stop offset="0.5" stop-color="#F5C518"/><stop offset="1" stop-color="#D69A00"/></linearGradient>
<linearGradient id="gblue" x1="0" y1="0" x2="0" y2="1"><stop offset="0" stop-color="#9CC8EE"/><stop offset="1" stop-color="#3F7FC0"/></linearGradient>
<linearGradient id="gcopper" x1="0" y1="0" x2="0" y2="1"><stop offset="0" stop-color="#F5C878"/><stop offset="1" stop-color="#B8721E"/></linearGradient>
</defs></svg>
<svg style="left:96px;top:217px" width="32" height="32" viewBox="0 0 32 32">
<path d="M27.49 5.70 L29.39 6.26 L29.39 8.74 L27.49 9.30 L26.55 10.92 L27.02 12.85 L24.87 14.09 L23.44 12.72 L21.56 12.72 L20.13 14.09 L17.98 12.85 L18.45 10.92 L17.51 9.30 L15.61 8.74 L15.61 6.26 L17.51 5.70 L18.45 4.08 L17.98 2.15 L20.13 0.91 L21.56 2.28 L23.44 2.28 L24.87 0.91 L27.02 2.15 L26.55 4.08 Z" fill="url(#ggray)" stroke="#6E6E6E" stroke-width="0.8"/><circle cx="22.5" cy="7.5" r="2.4" fill="#fff" stroke="#6E6E6E" stroke-width="0.6"/>
<path d="M1 30 C1 22 5 19 10 19 C15 19 18 22 18 30 Z" fill="url(#gblue)"/>
<path d="M8.5 19.5 L10 28 L11.5 19.5 Z" fill="#fff"/>
<ellipse cx="10" cy="13" rx="4.8" ry="6" fill="#8E8E8E"/>
<path d="M5.2 12 C5 6 14 5.5 14.8 11 C13 9 8 9 5.2 12Z" fill="#2E2E2E"/>
<path d="M17 21 L20.5 25 L28 13 L31 15 L21 30 L14 23 Z" fill="url(#gyel)" stroke="#E0A000" stroke-width="0.5"/>
</svg>
<svg style="left:96px;top:274px" width="32" height="32" viewBox="0 0 32 32">
<path d="M21.72 8.22 L24.83 9.05 L24.83 12.95 L21.72 13.78 L20.26 16.29 L21.10 19.40 L17.73 21.35 L15.45 19.07 L12.55 19.07 L10.27 21.35 L6.90 19.40 L7.74 16.29 L6.28 13.78 L3.17 12.95 L3.17 9.05 L6.28 8.22 L7.74 5.71 L6.90 2.60 L10.27 0.65 L12.55 2.93 L15.45 2.93 L17.73 0.65 L21.10 2.60 L20.26 5.71 Z" fill="url(#ggray)" stroke="#6E6E6E" stroke-width="0.8"/><circle cx="14" cy="11" r="4" fill="#fff" stroke="#6E6E6E" stroke-width="0.6"/>
<path d="M6 28 C7 25 9 24.5 11 25 L24 19.5 C25 17 27 16 30 16.5 L28 19 L29.5 20.5 L31.5 18.5 C31.5 21.5 29.5 23.5 26.5 23 L13.5 28.5 C12.5 31 10 31.5 7.5 31 L9.5 29 L8 27.5 Z" fill="url(#gyel)" stroke="#C99000" stroke-width="0.5"/>
</svg>
<svg style="left:96px;top:330px" width="32" height="32" viewBox="0 0 32 32">
<rect x="1" y="1" width="29" height="20" fill="#E6EEF9" stroke="#B8C8E0" stroke-width="0.6"/>
<g stroke="#fff" stroke-width="1"><path d="M6.8 1 V21 M12.6 1 V21 M18.4 1 V21 M24.2 1 V21 M1 6.5 H30 M1 11.5 H30 M1 16.5 H30"/></g>
<g fill="#BBD0EC"><rect x="1.5" y="2" width="4.8" height="4"/><rect x="13" y="2" width="4.8" height="4"/><rect x="24.6" y="7" width="4.8" height="4"/><rect x="7.2" y="12" width="4.8" height="4"/><rect x="18.8" y="17" width="4.8" height="3.5"/></g>
<rect x="18.8" y="7" width="5" height="4.5" fill="#E0563A"/><rect x="20.3" y="8.3" width="2" height="2" fill="#F8C0B0"/>
<path d="M17.77 19.56 L20.35 20.32 L20.35 23.68 L17.77 24.44 L16.50 26.65 L17.13 29.26 L14.22 30.94 L12.28 29.09 L9.72 29.09 L7.78 30.94 L4.87 29.26 L5.50 26.65 L4.23 24.44 L1.65 23.68 L1.65 20.32 L4.23 19.56 L5.50 17.35 L4.87 14.74 L7.78 13.06 L9.72 14.91 L12.28 14.91 L14.22 13.06 L17.13 14.74 L16.50 17.35 Z" fill="url(#ggray)" stroke="#6E6E6E" stroke-width="0.8"/><circle cx="11" cy="22" r="3.4" fill="#fff" stroke="#6E6E6E" stroke-width="0.6"/>
</svg>
<svg style="left:96px;top:386px" width="32" height="32" viewBox="0 0 32 32">
<circle cx="19.5" cy="11" r="10.5" fill="#F4F6F9" stroke="#B0B6BE" stroke-width="1"/>
<path d="M19.5 11 L19.5 3 M19.5 11 L13 17" stroke="#9AA0A8" stroke-width="1"/>
<path d="M15.12 19.80 L17.37 20.49 L17.37 23.51 L15.12 24.20 L13.96 26.20 L14.49 28.49 L11.88 30.00 L10.15 28.40 L7.85 28.40 L6.12 30.00 L3.51 28.49 L4.04 26.20 L2.88 24.20 L0.63 23.51 L0.63 20.49 L2.88 19.80 L4.04 17.80 L3.51 15.51 L6.12 14.00 L7.85 15.60 L10.15 15.60 L11.88 14.00 L14.49 15.51 L13.96 17.80 Z" fill="url(#ggray)" stroke="#6E6E6E" stroke-width="0.8"/><circle cx="9" cy="22" r="3" fill="#fff" stroke="#6E6E6E" stroke-width="0.6"/>
<path d="M22.5 11 H29 L27.5 24 H24 Z" fill="url(#gyel)" stroke="#E09A00" stroke-width="0.5"/>
<circle cx="25.8" cy="28" r="2.4" fill="#F5B800"/>
</svg>
<svg style="left:96px;top:442px" width="32" height="32" viewBox="0 0 32 32">
<path d="M5 12 L20 10 L25 14 L26 25 L16 31 L6 28 Z" fill="#8A8A8A"/>
<path d="M5 12 L12 11 L14 30 L6 28Z" fill="#C9C9C9"/>
<rect x="8" y="15" width="5" height="8" fill="#4C4C4C"/>
<path d="M20 12 L26 15 L27 24 L21 25Z" fill="#5E5E5E"/>
<rect x="5" y="25" width="3" height="3" fill="#F2C200"/><rect x="16" y="27" width="4" height="3" fill="#F2C200"/><rect x="15" y="13" width="3" height="3" fill="#F2C200"/>
<g fill="none" stroke="url(#gcopper)" stroke-width="2.6"><ellipse cx="7.5" cy="6" rx="5.5" ry="3.8"/><ellipse cx="21" cy="6" rx="5.5" ry="3.8"/></g>
<path d="M10 6 H18" stroke="#E2A85A" stroke-width="2.2"/>
</svg>
<svg style="left:12px;top:528px" width="32" height="32" viewBox="0 0 32 32"><g><path d="M5 5 L12 4.5 L12 28 L5 28Z" fill="#3E3E3E"/><path d="M12 4.5 L19 4.5 L19 28 L12 28Z" fill="#4A4A4A"/><path d="M19 4.5 L26 5 L26.5 28 L19 28Z" fill="#3A3A3A"/>
<rect x="7" y="6.5" width="3.5" height="15" fill="#F4F4F4"/><rect x="13.8" y="6.5" width="3.5" height="15" fill="#F4F4F4"/><rect x="20.5" y="6.5" width="3.5" height="15" fill="#F4F4F4"/>
<path d="M7.5 10 H10 M7.5 12 H10 M14.3 10 H16.8 M14.3 12 H16.8 M21 10 H23.5 M21 12 H23.5" stroke="#999" stroke-width="0.6"/>
<circle cx="8.7" cy="25" r="1.1" fill="#ddd"/><circle cx="15.5" cy="25" r="1.1" fill="#ddd"/><circle cx="22.2" cy="25" r="1.1" fill="#ddd"/><path d="M26 6 L28 8 L28 27 L26.5 28Z" fill="#2A2A2A"/></g></svg>
<svg style="left:12px;top:568px" width="32" height="32" viewBox="0 0 32 32"><rect x="0.5" y="2" width="31" height="27" rx="2.5" fill="#E4E4E2" stroke="#B9B9B5"/><rect x="3" y="4.5" width="26" height="17" rx="1" fill="#2F62B0" stroke="#1E3F80" stroke-width="0.8"/>
<path d="M4 13 H11 L13 8 L15 18 L17 11 L18.5 13 H28" fill="none" stroke="#B8F0C0" stroke-width="1.3"/><path d="M8 25.5 H24" stroke="#AEAEAA" stroke-width="1.2" stroke-dasharray="2 1"/></svg>
<svg style="left:12px;top:608px" width="32" height="32" viewBox="0 0 32 32"><path d="M2 2 L27 6 L27 30 L2 26 Z" fill="#F8F9FC" stroke="#8C9AB8" stroke-width="1"/><path d="M2 2 L27 6 L27 8.5 L2 4.5Z" fill="#8EA4D0"/>
<path d="M5 14 L10 11 L15 14 L20 12 L24 15" fill="none" stroke="#E06868" stroke-width="1"/><path d="M5 16 L10 13.5 L15 16.5 L24 17" fill="none" stroke="#6A8AD8" stroke-width="1"/>
<rect x="4" y="19" width="2" height="5" fill="#E03030"/><rect x="6" y="20" width="2" height="4" fill="#3060C8"/><rect x="8" y="21" width="1.5" height="3" fill="#F0C020"/>
<path d="M14 23 C14 19 23 19 24 23 C24 26 14 26 14 23Z" fill="#E8352A"/><path d="M19 22.5 L24 23 C24 25 21 26 19 25.5Z" fill="#3A7BD5"/><path d="M19 22.5 L14.5 21.5 C15.5 20.5 17 20 19 20Z" fill="#F5C400"/></svg>
<svg style="left:12px;top:648px" width="32" height="32" viewBox="0 0 32 32"><rect x="4" y="4" width="24" height="26" fill="#F8F8F8" stroke="#A8ADB5" stroke-width="0.8"/>
<g fill="none" stroke="#666" stroke-width="0.8"><circle cx="3.5" cy="7" r="1"/><circle cx="3.5" cy="11" r="1"/><circle cx="3.5" cy="15" r="1"/><circle cx="3.5" cy="19" r="1"/><circle cx="3.5" cy="23" r="1"/><circle cx="3.5" cy="27" r="1"/></g>
<g stroke="#8894A8" stroke-width="0.8"><path d="M8 20 H25 M8 23 H25 M8 26 H25"/></g>
<path d="M26.87 7.76 L28.95 8.15 L28.95 9.85 L26.87 10.24 L26.48 11.45 L27.94 12.99 L26.93 14.37 L25.02 13.45 L23.99 14.20 L24.27 16.30 L22.65 16.83 L21.64 14.97 L20.36 14.97 L19.35 16.83 L17.73 16.30 L18.01 14.20 L16.98 13.45 L15.07 14.37 L14.06 12.99 L15.52 11.45 L15.13 10.24 L13.05 9.85 L13.05 8.15 L15.13 7.76 L15.52 6.55 L14.06 5.01 L15.07 3.63 L16.98 4.55 L18.01 3.80 L17.73 1.70 L19.35 1.17 L20.36 3.03 L21.64 3.03 L22.65 1.17 L24.27 1.70 L23.99 3.80 L25.02 4.55 L26.93 3.63 L27.94 5.01 L26.48 6.55 Z" fill="url(#gyel)" stroke="#C9A000" stroke-width="0.6"/><circle cx="21" cy="9" r="3.3" fill="#FCEFB0" stroke="#C9A000" stroke-width="0.5"/>
<path d="M13.89 15.09 L15.46 15.35 L15.46 16.65 L13.89 16.91 L13.57 17.80 L14.60 19.01 L13.77 20.01 L12.40 19.20 L11.58 19.68 L11.59 21.27 L10.31 21.49 L9.78 19.99 L8.84 19.83 L7.83 21.06 L6.71 20.40 L7.26 18.92 L6.65 18.19 L5.09 18.48 L4.65 17.26 L6.03 16.47 L6.03 15.53 L4.65 14.74 L5.09 13.52 L6.65 13.81 L7.26 13.08 L6.71 11.60 L7.83 10.94 L8.84 12.17 L9.78 12.01 L10.31 10.51 L11.59 10.73 L11.58 12.32 L12.40 12.80 L13.77 11.99 L14.60 12.99 L13.57 14.20 Z" fill="url(#gyel)" stroke="#C9A000" stroke-width="0.6"/><circle cx="10" cy="16" r="2.2" fill="#FCEFB0"/></svg>
<svg style="left:12px;top:688px" width="32" height="32" viewBox="0 0 32 32"><defs><radialGradient id="gcomp" cx="40%" cy="35%" r="65%"><stop offset="0" stop-color="#FBE7B5"/><stop offset="0.5" stop-color="#D79B45"/><stop offset="1" stop-color="#5E3A12"/></radialGradient><radialGradient id="gface" cx="45%" cy="40%" r="60%"><stop offset="0" stop-color="#F6E2B8"/><stop offset="1" stop-color="#C8944A"/></radialGradient></defs>
<ellipse cx="16" cy="17" rx="14.5" ry="13.5" fill="url(#gcomp)" stroke="#4A2C0A" stroke-width="0.8"/><ellipse cx="16" cy="16.5" rx="10.5" ry="9.8" fill="url(#gface)" stroke="#8E5A1A" stroke-width="0.8"/>
<path d="M5 22 L14.5 15 L17 18Z" fill="#2F7FC8"/><path d="M27 11 L17 18 L14.5 15Z" fill="#1F5FA8"/><path d="M9 9 L16.5 15.5 L14.5 17Z" fill="#3A9AD8"/><path d="M23 24 L14.5 17 L16.5 15.5Z" fill="#2A6EB8"/></svg>
<svg style="left:12px;top:728px" width="32" height="32" viewBox="0 0 32 32"><g transform="translate(13,3) scale(0.7)"><circle cx="0" cy="0" r="1.8" fill="#3DA83D"/><path d="M-2.5 2 C-2.5 1 2.5 1 2.5 2 L2 7 L1 7 L1 11 L-1 11 L-1 7 L-2 7Z" fill="#48B848"/></g><g transform="translate(19,7) scale(0.75)"><circle cx="0" cy="0" r="1.8" fill="#3DA83D"/><path d="M-2.5 2 C-2.5 1 2.5 1 2.5 2 L2 7 L1 7 L1 11 L-1 11 L-1 7 L-2 7Z" fill="#48B848"/></g><g transform="translate(27,10) scale(0.7)"><circle cx="0" cy="0" r="1.8" fill="#3DA83D"/><path d="M-2.5 2 C-2.5 1 2.5 1 2.5 2 L2 7 L1 7 L1 11 L-1 11 L-1 7 L-2 7Z" fill="#48B848"/></g><g transform="translate(7,13) scale(0.9)"><circle cx="0" cy="0" r="1.8" fill="#3DA83D"/><path d="M-2.5 2 C-2.5 1 2.5 1 2.5 2 L2 7 L1 7 L1 11 L-1 11 L-1 7 L-2 7Z" fill="#48B848"/></g><g transform="translate(18,18) scale(0.9)"><circle cx="0" cy="0" r="1.8" fill="#3DA83D"/><path d="M-2.5 2 C-2.5 1 2.5 1 2.5 2 L2 7 L1 7 L1 11 L-1 11 L-1 7 L-2 7Z" fill="#48B848"/></g><g transform="translate(24,13) scale(0.8)"><circle cx="0" cy="0" r="1.8" fill="#3DA83D"/><path d="M-2.5 2 C-2.5 1 2.5 1 2.5 2 L2 7 L1 7 L1 11 L-1 11 L-1 7 L-2 7Z" fill="#48B848"/></g><g transform="translate(10,22) scale(1.0)"><circle cx="0" cy="0" r="1.8" fill="#3DA83D"/><path d="M-2.5 2 C-2.5 1 2.5 1 2.5 2 L2 7 L1 7 L1 11 L-1 11 L-1 7 L-2 7Z" fill="#48B848"/></g></svg>
<svg style="left:12px;top:768px" width="32" height="32" viewBox="0 0 32 32"><rect x="2" y="6" width="28" height="24" fill="#FDFDFD" stroke="#5A6C8E" stroke-width="1"/><rect x="2" y="6" width="28" height="3.5" fill="#A4B4D0"/>
<circle cx="15" cy="21" r="7.5" fill="#F4F6F8" stroke="#707880" stroke-width="1"/><path d="M15 21 L15 15.5 M15 21 L19.5 23" stroke="#707880" stroke-width="0.9"/>
<path d="M9 11 L23 4 L30 7 L30 11 L16 18 L9 15Z" fill="#5C85A8"/><path d="M16 11 L30 5 L30 9 L16 15Z" fill="#E89890"/><path d="M9 11 L16 8 L23 4 L30 7 L16 13 Z" fill="#F0B0A8"/></svg>
<svg style="left:12px;top:808px" width="32" height="32" viewBox="0 0 32 32"><circle cx="13.5" cy="9" r="8.5" fill="#F4F6F8" stroke="#8A9098" stroke-width="1"/><path d="M13.5 9 V3 M13.5 9 L9 13" stroke="#707880" stroke-width="0.9"/>
<rect x="18" y="15" width="12" height="14" fill="#9A9A9A"/><rect x="20" y="17" width="5" height="8" fill="#505050"/><rect x="16" y="26" width="15" height="3" fill="#58B858"/><rect x="26" y="15" width="4" height="12" fill="#C8C8C8"/>
<path d="M0.5 30 C0.5 24 3 22 7 22 C11 22 13.5 24 13.5 30Z" fill="#F0A050"/><ellipse cx="7" cy="18" rx="3.8" ry="4.5" fill="#7A7A7A"/><path d="M3.2 17 C3.2 13 10.8 13 10.8 17 C9 15.5 5 15.5 3.2 17Z" fill="#3A3A3A"/></svg>
<svg style="left:12px;top:848px" width="32" height="32" viewBox="0 0 32 32"><path d="M4 11 L18 8 L25 12 L26 24 L15 31 L4 27 Z" fill="#7E7E7E"/><path d="M4 11 L11 10 L13 30 L4 27Z" fill="#CFCFCF"/>
<rect x="7" y="14" width="5" height="9" fill="#454545"/><path d="M18 10 L25 13 L26 24 L19 25Z" fill="#5A5A5A"/>
<rect x="4" y="24" width="3" height="3" fill="#F2C200"/><rect x="15" y="27" width="4" height="3" fill="#F2C200"/>
<path d="M9 22 L22 9.5 C21 6 23 3 27 3 L25 6 L26.5 7.5 L29.5 5.5 C30 9 27.5 11.5 24 11 L11.5 24 Z" fill="url(#gyel)" stroke="#B88A00" stroke-width="0.6"/></svg>
<svg style="left:248px;top:167px" width="16" height="16" viewBox="0 0 32 32">
<path d="M5 12 L20 10 L25 14 L26 25 L16 31 L6 28 Z" fill="#8A8A8A"/><path d="M5 12 L12 11 L14 30 L6 28Z" fill="#C9C9C9"/><rect x="8" y="15" width="5" height="8" fill="#4C4C4C"/>
<rect x="5" y="25" width="4" height="4" fill="#F2C200"/><rect x="16" y="27" width="4" height="3" fill="#F2C200"/>
<g fill="none" stroke="#D8962A" stroke-width="3.5"><ellipse cx="8" cy="6" rx="5.5" ry="4"/><ellipse cx="22" cy="6" rx="5.5" ry="4"/></g></svg>
<svg style="left:1232px;top:686px" width="256" height="192" viewBox="0 0 1261 946" preserveAspectRatio="none">
<defs><clipPath id="pc"><rect x="6" y="5" width="1250" height="941"/></clipPath>
<linearGradient id="pcap" x1="0" y1="0" x2="1" y2="0.3"><stop offset="0" stop-color="#E8E8E6"/><stop offset="0.55" stop-color="#C9C9C6"/><stop offset="1" stop-color="#9A9A96"/></linearGradient>
<linearGradient id="pbox" x1="0" y1="0" x2="1" y2="1"><stop offset="0" stop-color="#E2E2E0"/><stop offset="1" stop-color="#C6C6C4"/></linearGradient></defs>
<g clip-path="url(#pc)">
<rect x="0" y="0" width="1261" height="946" fill="#16140F"/>
<path d="M120 0 L180 0 L180 110 L120 110Z" fill="#5E4E2C"/>
<path d="M0 90 L350 150 L350 175 L0 120Z" fill="#3A3A34"/>
<path d="M10 180 L220 205 L220 215 L10 195Z" fill="#4A4A40"/>
<path d="M70 210 L200 220 L200 320 L70 300Z" fill="#8A8C88"/>
<path d="M300 20 L900 30 L900 60 L300 50Z" fill="#3A3A30"/>
<!-- back motor cylinder -->
<path d="M760 110 L960 75 C1010 80 1020 130 1010 180 L1000 300 L800 330Z" fill="#C4C4C0"/>
<!-- gearbox -->
<path d="M590 90 L700 60 L790 120 L840 300 L830 560 L760 660 L640 670 L600 400Z" fill="#B9BDB0"/>
<path d="M640 200 C700 230 780 300 800 420 L790 560 L700 640 Z" fill="#A9B49A"/>
<!-- terminal box -->
<path d="M300 210 L650 200 L660 360 L470 420 L300 320Z" fill="#C8CAC4"/>
<path d="M340 110 L600 90 L620 225 L345 240Z" fill="#E2E2DE"/>
<path d="M310 205 L655 195 L660 240 L320 255Z" fill="#D4D4D0"/>
<circle cx="550" cy="295" r="32" fill="#D8D8D4" stroke="#888" stroke-width="3"/>
<circle cx="610" cy="280" r="26" fill="#9AB08A"/>
<!-- fins body -->
<path d="M440 400 L720 340 L760 470 L740 620 L520 720 L470 700Z" fill="#8E9A84"/>
<path d="M470 500 L740 430" stroke="#3E4636" stroke-width="7"/><path d="M470 526 L740 456" stroke="#3E4636" stroke-width="7"/><path d="M470 552 L740 482" stroke="#3E4636" stroke-width="7"/><path d="M470 578 L740 508" stroke="#3E4636" stroke-width="7"/><path d="M470 604 L740 534" stroke="#3E4636" stroke-width="7"/><path d="M470 630 L740 560" stroke="#3E4636" stroke-width="7"/><path d="M470 656 L740 586" stroke="#3E4636" stroke-width="7"/><path d="M470 682 L740 612" stroke="#3E4636" stroke-width="7"/><path d="M470 708 L740 638" stroke="#3E4636" stroke-width="7"/><path d="M470 734 L740 664" stroke="#3E4636" stroke-width="7"/>
<path d="M545 430 L690 395 L700 530 L565 585Z" fill="#5E8C6A"/>
<path d="M560 545 L700 505 L705 535 L565 585Z" fill="#3C78C0"/>
<!-- cables -->
<path d="M480 770 C600 720 700 700 790 700" fill="none" stroke="#6E6E68" stroke-width="38"/>
<path d="M300 946 C320 880 340 840 370 820" fill="none" stroke="#7A7A72" stroke-width="30"/>
<path d="M520 946 C600 870 700 810 800 790" fill="none" stroke="#B4A878" stroke-width="14"/>
<!-- fan cap -->
<path d="M30 380 C120 300 300 280 420 320 C500 360 510 560 490 680 C460 800 330 860 180 840 C60 820 0 700 5 560 C8 470 15 420 30 380Z" fill="url(#pcap)"/>
<ellipse cx="135" cy="605" rx="130" ry="210" fill="#D2D2CE"/>
<rect x="117.1" y="426.8" width="18" height="22" fill="#4A4232" transform="rotate(28 126.1 437.8)"/><rect x="147.1" y="442.8" width="18" height="22" fill="#4A4232" transform="rotate(28 156.1 453.8)"/><rect x="177.1" y="458.7" width="18" height="22" fill="#4A4232" transform="rotate(28 186.1 469.7)"/><rect x="207.1" y="474.7" width="18" height="22" fill="#4A4232" transform="rotate(28 216.1 485.7)"/><rect x="68.3" y="446.2" width="18" height="22" fill="#4A4232" transform="rotate(28 77.3 457.2)"/><rect x="98.3" y="462.1" width="18" height="22" fill="#4A4232" transform="rotate(28 107.3 473.1)"/><rect x="128.3" y="478.1" width="18" height="22" fill="#4A4232" transform="rotate(28 137.3 489.1)"/><rect x="158.3" y="494.0" width="18" height="22" fill="#4A4232" transform="rotate(28 167.3 505.0)"/><rect x="188.4" y="510.0" width="18" height="22" fill="#4A4232" transform="rotate(28 197.4 521.0)"/><rect x="218.4" y="526.0" width="18" height="22" fill="#4A4232" transform="rotate(28 227.4 537.0)"/><rect x="49.5" y="481.5" width="18" height="22" fill="#4A4232" transform="rotate(28 58.5 492.5)"/><rect x="79.5" y="497.4" width="18" height="22" fill="#4A4232" transform="rotate(28 88.5 508.4)"/><rect x="109.5" y="513.4" width="18" height="22" fill="#4A4232" transform="rotate(28 118.5 524.4)"/><rect x="139.6" y="529.4" width="18" height="22" fill="#4A4232" transform="rotate(28 148.6 540.4)"/><rect x="169.6" y="545.3" width="18" height="22" fill="#4A4232" transform="rotate(28 178.6 556.3)"/><rect x="199.6" y="561.3" width="18" height="22" fill="#4A4232" transform="rotate(28 208.6 572.3)"/><rect x="229.6" y="577.3" width="18" height="22" fill="#4A4232" transform="rotate(28 238.6 588.3)"/><rect x="30.7" y="516.8" width="18" height="22" fill="#4A4232" transform="rotate(28 39.7 527.8)"/><rect x="60.7" y="532.8" width="18" height="22" fill="#4A4232" transform="rotate(28 69.7 543.8)"/><rect x="90.8" y="548.7" width="18" height="22" fill="#4A4232" transform="rotate(28 99.8 559.7)"/><rect x="150.8" y="580.6" width="18" height="22" fill="#4A4232" transform="rotate(28 159.8 591.6)"/><rect x="180.8" y="596.6" width="18" height="22" fill="#4A4232" transform="rotate(28 189.8 607.6)"/><rect x="210.8" y="612.6" width="18" height="22" fill="#4A4232" transform="rotate(28 219.8 623.6)"/><rect x="42.0" y="568.1" width="18" height="22" fill="#4A4232" transform="rotate(28 51.0 579.1)"/><rect x="162.0" y="631.9" width="18" height="22" fill="#4A4232" transform="rotate(28 171.0 642.9)"/><rect x="192.1" y="647.9" width="18" height="22" fill="#4A4232" transform="rotate(28 201.1 658.9)"/><rect x="222.1" y="663.8" width="18" height="22" fill="#4A4232" transform="rotate(28 231.1 674.8)"/><rect x="23.2" y="603.4" width="18" height="22" fill="#4A4232" transform="rotate(28 32.2 614.4)"/><rect x="53.2" y="619.4" width="18" height="22" fill="#4A4232" transform="rotate(28 62.2 630.4)"/><rect x="113.2" y="651.3" width="18" height="22" fill="#4A4232" transform="rotate(28 122.2 662.3)"/><rect x="143.3" y="667.2" width="18" height="22" fill="#4A4232" transform="rotate(28 152.3 678.2)"/><rect x="173.3" y="683.2" width="18" height="22" fill="#4A4232" transform="rotate(28 182.3 694.2)"/><rect x="203.3" y="699.2" width="18" height="22" fill="#4A4232" transform="rotate(28 212.3 710.2)"/><rect x="34.4" y="654.7" width="18" height="22" fill="#4A4232" transform="rotate(28 43.4 665.7)"/><rect x="64.4" y="670.6" width="18" height="22" fill="#4A4232" transform="rotate(28 73.4 681.6)"/><rect x="94.5" y="686.6" width="18" height="22" fill="#4A4232" transform="rotate(28 103.5 697.6)"/><rect x="124.5" y="702.6" width="18" height="22" fill="#4A4232" transform="rotate(28 133.5 713.6)"/><rect x="154.5" y="718.5" width="18" height="22" fill="#4A4232" transform="rotate(28 163.5 729.5)"/><rect x="184.5" y="734.5" width="18" height="22" fill="#4A4232" transform="rotate(28 193.5 745.5)"/><rect x="45.7" y="706.0" width="18" height="22" fill="#4A4232" transform="rotate(28 54.7 717.0)"/><rect x="75.7" y="721.9" width="18" height="22" fill="#4A4232" transform="rotate(28 84.7 732.9)"/><rect x="105.7" y="737.9" width="18" height="22" fill="#4A4232" transform="rotate(28 114.7 748.9)"/><rect x="135.7" y="753.8" width="18" height="22" fill="#4A4232" transform="rotate(28 144.7 764.8)"/>
<circle cx="110" cy="610" r="34" fill="#CFCFCB"/><circle cx="110" cy="610" r="12" fill="#555"/>
<circle cx="485" cy="575" r="12" fill="#9A9A90"/>
<!-- right box -->
<path d="M965 150 L1255 80 L1255 490 L965 420Z" fill="#CFCFCC"/>
<path d="M965 150 L1010 120 L1255 80 L1255 165 L1030 135Z" fill="#DCD6CC"/>
<path d="M840 300 L965 240 L965 330 L840 360Z" fill="#D8D0C4"/>
<path d="M795 430 L840 395 L965 385 L965 420 L1255 490 L1255 946 L790 946Z" fill="url(#pbox)"/>
<path d="M820 415 L965 390 L1255 480 L1255 500 L965 425Z" fill="#B8B2A8"/>
<circle cx="830" cy="452" r="20" fill="#3A3630"/><circle cx="845" cy="380" r="22" fill="#3A3630"/><circle cx="810" cy="900" r="20" fill="#3A3630"/>
<circle cx="940" cy="740" r="6" fill="#B06040"/>
</g></svg>
<svg style="left:11px;top:10px" width="38" height="40" viewBox="0 0 38 40">
<defs><linearGradient id="lg2" x1="0" y1="0" x2="0" y2="1"><stop offset="0" stop-color="#FAFBFD"/><stop offset="0.3" stop-color="#E6EAF1"/><stop offset="0.5" stop-color="#BCC6D8"/><stop offset="0.75" stop-color="#E8ECF3"/><stop offset="1" stop-color="#FFFFFF"/></linearGradient></defs>
<circle cx="18.5" cy="19.3" r="17.6" fill="url(#lg2)" stroke="#8A8A8A" stroke-width="1"/>
<path d="M9.5 11 L14.5 11 L26.8 28.5 L22 28.5 Z" fill="#2BA6DC"/>
<path d="M7.5 33.5 L28.5 7.5" stroke="#2BA6DC" stroke-width="2.3"/>
<circle cx="28" cy="7.5" r="2" fill="#2BA6DC"/>
</svg>
<svg style="left:54px;top:18px" width="7" height="8"><path d="M0.5 0.5 H6.5" stroke="#1F3B8F"/><path d="M0.5 2.5 L6.5 2.5 L3.5 6 Z" fill="#1F3B8F"/></svg>
</body></html>
